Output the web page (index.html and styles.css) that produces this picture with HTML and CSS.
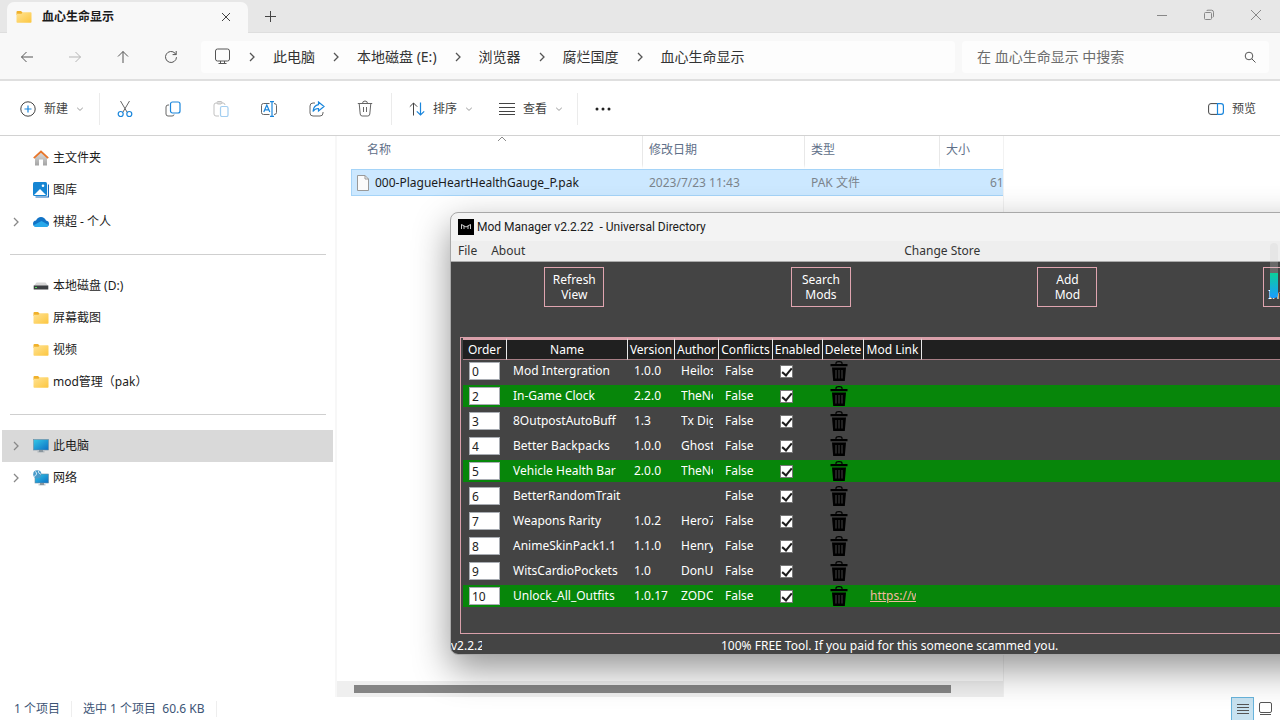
FILE: index.html
```html
<!DOCTYPE html>
<html lang="zh-CN">
<head>
<meta charset="utf-8">
<title>血心生命显示</title>
<link rel="stylesheet" href="styles.css">
</head>
<body>
<svg class="defs" aria-hidden="true">
  <defs>
    <linearGradient id="gFolder" x1="0" y1="0" x2="1" y2="1"><stop offset="0" stop-color="#ffe394"/><stop offset="1" stop-color="#fcc63f"/></linearGradient>
    <linearGradient id="gScreen" x1="0" y1="0" x2="1" y2="1"><stop offset="0" stop-color="#35c8e6"/><stop offset="1" stop-color="#0c6fc4"/></linearGradient>
    <linearGradient id="gWall" x1="0" y1="0" x2="0" y2="1"><stop offset="0" stop-color="#dedede"/><stop offset="1" stop-color="#a3a3a3"/></linearGradient>
    <symbol id="folder" viewBox="0 0 16 16"><path d="M.5 3q0-1 1-1H5l1.500 1.500V6h-6z" fill="#f0b12b"/><path d="M.5 4.800h5L6.800 3.300h8q.7 0 .7.700v9q0 .8-.8.8H1.300q-.8 0-.8-.8z" fill="url(#gFolder)"/></symbol>
    <symbol id="chev" viewBox="0 0 12 12"><path d="M4 2 8 6 4 10" fill="none" stroke="currentColor" stroke-width="1.300"/></symbol>
    <symbol id="down" viewBox="0 0 8 8"><path d="M1.200 2.800 4 5.400 6.800 2.800" fill="none" stroke="#9a9a9a"/></symbol>
    <symbol id="bin" viewBox="0 0 18 20"><path d="M6 3V2q0-1.400 3-1.400T12 2v1" fill="none" stroke="#000" stroke-width="1.200"/><path d="M.5 3h17v2.200H.5zM2 6.500h14L14.800 20H3.200z" fill="#000"/><path d="M6 9v8.500M9 9v8.500M12 9v8.500" class="slot"/></symbol>
  </defs>
</svg>

<div class="explorer">
  <header class="tabs">
    <div class="tab">
      <svg width="16" height="16"><use href="#folder"/></svg>
      <h1 class="tab-title">血心生命显示</h1>
      <button class="plain" aria-label="关闭标签页"><svg width="10" height="10" viewBox="0 0 10 10"><path d="M1 1l8 8M9 1l-8 8" class="ln"/></svg></button>
    </div>
    <button class="plain new-tab" aria-label="新标签页"><svg width="11" height="11" viewBox="0 0 11 11"><path d="M5.500 0v11M0 5.500h11" class="ln"/></svg></button>
    <div class="captions">
      <button class="plain" aria-label="最小化"><svg width="12" height="12" viewBox="0 0 12 12"><path d="M1 6.500h10" class="ln"/></svg></button>
      <button class="plain" aria-label="还原"><svg width="12" height="12" viewBox="0 0 12 12"><path d="M1.500 4.500q0-1 1-1h5q1 0 1 1v5q0 1-1 1h-5q-1 0-1-1zM3.500 2q.3-.8 1.500-.8h3.500q2 0 2 2V7q0 1-.8 1.500" class="ln"/></svg></button>
      <button class="plain" aria-label="关闭"><svg width="12" height="12" viewBox="0 0 12 12"><path d="M1 1l10 10M11 1 1 11" class="ln"/></svg></button>
    </div>
  </header>

  <nav class="address-row" aria-label="地址">
    <button class="plain nav-btn" aria-label="后退"><svg width="14" height="14" viewBox="0 0 14 14"><path d="M13 7H1.500M6.500 2l-5 5 5 5" class="ln"/></svg></button>
    <button class="plain nav-btn dim" aria-label="前进"><svg width="14" height="14" viewBox="0 0 14 14"><path d="M1 7h11.500M7.500 2l5 5-5 5" class="ln"/></svg></button>
    <button class="plain nav-btn" aria-label="向上"><svg width="14" height="14" viewBox="0 0 14 14"><path d="M7 13V1.500M2 6.500l5-5 5 5" class="ln"/></svg></button>
    <button class="plain nav-btn" aria-label="刷新"><svg width="14" height="14" viewBox="0 0 14 14"><path d="M12.500 7.200A5.500 5.500 0 1 1 11 3.200l1 1.300M12.200 1v3.600H8.600" class="ln"/></svg></button>
    <div class="crumbs">
      <svg width="17" height="17" viewBox="0 0 17 17"><path d="M1.500 3q0-2 2-2h10q2 0 2 2v8q0 2-2 2h-10q-2 0-2-2zM6.500 13v2.500M10.500 13v2.500M4.500 15.500h8" class="ln"/></svg>
      <svg class="sep" width="12" height="12"><use href="#chev"/></svg><a href="#">此电脑</a>
      <svg class="sep" width="12" height="12"><use href="#chev"/></svg><a href="#">本地磁盘 (E:)</a>
      <svg class="sep" width="12" height="12"><use href="#chev"/></svg><a href="#">浏览器</a>
      <svg class="sep" width="12" height="12"><use href="#chev"/></svg><a href="#">腐烂国度</a>
      <svg class="sep" width="12" height="12"><use href="#chev"/></svg><a href="#">血心生命显示</a>
    </div>
    <div class="search">
      <input type="text" aria-label="搜索" placeholder="在 血心生命显示 中搜索">
      <svg width="12" height="12" viewBox="0 0 12 12"><circle cx="5" cy="5" r="3.800" class="ln"/><path d="M7.800 7.800l3.700 3.700" class="ln"/></svg>
    </div>
  </nav>

  <div class="toolbar">
    <button class="plain tool new"><svg width="16" height="16" viewBox="0 0 16 16"><circle cx="8" cy="8" r="7.200" class="ln"/><path d="M8 4.500v7M4.500 8h7" class="bl"/></svg>新建<svg width="8" height="8"><use href="#down"/></svg></button>
    <span class="rule"></span>
    <button class="plain icon-btn" aria-label="剪切"><svg width="16" height="18" viewBox="0 0 16 18"><path d="M3.500 1l6.800 11.500M12.500 1 5.700 12.500" class="ln"/><circle cx="3.700" cy="14" r="2.500" class="bl"/><circle cx="12.300" cy="14" r="2.500" class="bl"/></svg></button>
    <button class="plain icon-btn" aria-label="复制"><svg width="16" height="16" viewBox="0 0 16 16"><path d="M4 4H3Q1 4 1 6v7q0 2 2 2h4q2 0 2-1.500" class="ln"/><rect x="5.500" y="1" width="9.500" height="11" rx="2" class="bl"/></svg></button>
    <button class="plain icon-btn faded" aria-label="粘贴"><svg width="16" height="16" viewBox="0 0 16 16"><path d="M6 15H3q-2 0-2-2V4q0-2 2-2h7q2 0 2 2M4 1.500q0-1 1-1h3q1 0 1 1T8 3H5Q4 3 4 2" class="ln"/><rect x="7.500" y="5.500" width="7.500" height="10" rx="1.500" class="bl"/></svg></button>
    <button class="plain icon-btn" aria-label="重命名"><svg width="18" height="16" viewBox="0 0 18 16"><path d="M9.500 13.500H3.500q-2 0-2-2v-7q0-2 2-2h6M14 2.500q2.500 0 2.500 2v7q0 2-2.500 2" class="ln"/><path d="M3.800 11l3-7 3 7M4.800 8.800h4M12 .700v14.600M10 .700h4M10 15.300h4" class="bl"/></svg></button>
    <button class="plain icon-btn" aria-label="共享"><svg width="16" height="16" viewBox="0 0 16 16"><path d="M6 2H4Q1 2 1 5v7q0 3 3 3h7q3 0 3-3v-1" class="ln"/><path d="M9.500 1l5.500 4.500-5.500 4.500V7.500Q6 7.300 4 10.500 4.500 4.500 9.500 3.700z" class="bl"/></svg></button>
    <button class="plain icon-btn" aria-label="删除"><svg width="16" height="17" viewBox="0 0 16 17"><path d="M.8 3.500h14.400M5.500 3.500Q5.500 1 8 1t2.500 2.500M2.200 3.500l1 10.500q.2 2 2 2h5.600q1.800 0 2-2l1-10.500M6.500 7v5M9.500 7v5" class="ln"/></svg></button>
    <span class="rule wide"></span>
    <button class="plain tool"><svg width="16" height="14" viewBox="0 0 16 14"><path d="M4.500 13.500V1M.8 4.700 4.500 1l3.700 3.700" class="ln"/><path d="M11.500.5V13M7.800 9.300l3.700 3.700 3.700-3.700" class="bl"/></svg>排序<svg width="8" height="8"><use href="#down"/></svg></button>
    <button class="plain tool view"><svg width="16" height="14" viewBox="0 0 16 14"><path d="M0 1.500h16M0 5.500h16M0 9.500h16M0 12.500h16" class="ln"/></svg>查看<svg width="8" height="8"><use href="#down"/></svg></button>
    <span class="rule"></span>
    <button class="plain icon-btn" aria-label="更多"><svg width="16" height="4" viewBox="0 0 16 4"><g fill="#222"><circle cx="2" cy="2" r="1.500"/><circle cx="8" cy="2" r="1.500"/><circle cx="14" cy="2" r="1.500"/></g></svg></button>
    <button class="plain tool preview"><svg width="16" height="12" viewBox="0 0 16 12"><path d="M9 .600H3Q.6.600.6 3v6q0 2.400 2.400 2.400h6" class="ln"/><path d="M9.500.600H13q2.400 0 2.400 2.400v6q0 2.400-2.400 2.400H9.500z" class="bl"/></svg>预览</button>
  </div>

  <main class="main">
    <ul class="tree">
      <li><span class="arrow"></span><svg width="16" height="16" viewBox="0 0 16 16"><path d="M2 7.500 8 2l6 5.500V15.500h-4V9.500H6v6H2z" fill="url(#gWall)"/><path d="M.8 8.200 8 1.500l7.200 6.700" fill="none" stroke="#e8762b" stroke-width="1.800"/></svg>主文件夹</li>
      <li><span class="arrow"></span><svg width="16" height="16" viewBox="0 0 16 16"><path d="M15.500 2.500v12.500H2.500" fill="none" stroke="#1769ba" stroke-width="1.200"/><rect width="14" height="14" rx="1.500" fill="#1585d3"/><path d="M1 13 7 7l6 6z" fill="#fff"/><circle cx="10" cy="3.800" r="1.300" fill="#fff"/></svg>图库</li>
      <li><span class="arrow"><svg width="12" height="12"><use href="#chev"/></svg></span><svg width="16" height="16" viewBox="0 0 16 16"><path d="M3.500 13q-3.500-.4-3.500-3.200T3 6.600Q4.500 3 8 3t5 3.500q3 .5 3 3.300T13 13z" fill="#1173c6"/><path d="M3 13q-2-.4-2.500-1.800L8.500 7l7.200 4Q15 13 13 13z" fill="#28a8ea"/></svg>祺超 - 个人</li>
      <li class="line" role="separator"></li>
      <li><span class="arrow"></span><svg width="16" height="16" viewBox="0 0 16 16"><path d="M3.500 4.500h9l2.800 3.500H.7z" fill="#d6d6d6"/><rect x=".7" y="7.500" width="14.600" height="4" fill="#3c3f42"/><rect x="2" y="9" width="2" height="1" fill="#57e05f"/></svg>本地磁盘 (D:)</li>
      <li><span class="arrow"></span><svg width="16" height="16"><use href="#folder"/></svg>屏幕截图</li>
      <li><span class="arrow"></span><svg width="16" height="16"><use href="#folder"/></svg>视频</li>
      <li><span class="arrow"></span><svg width="16" height="16"><use href="#folder"/></svg>mod管理（pak）</li>
      <li class="line" role="separator"></li>
      <li class="current"><span class="arrow"><svg width="12" height="12"><use href="#chev"/></svg></span><svg width="16" height="16" viewBox="0 0 16 16"><rect x=".5" y="1.500" width="15" height="10.500" fill="url(#gScreen)" stroke="#6d8ba0" stroke-width=".6"/><path d="M6 12h4v1.500h1.500v.8h-7v-.8H6z" fill="#8a969e"/></svg>此电脑</li>
      <li><span class="arrow"><svg width="12" height="12"><use href="#chev"/></svg></span><svg width="16" height="16" viewBox="0 0 16 16"><rect x="2" y="4" width="13.500" height="9" fill="url(#gScreen)" stroke="#6d8ba0" stroke-width=".6"/><path d="M7 13h4v1.400h1.500v.9h-7v-.9H7z" fill="#8a969e"/><circle cx="4.300" cy="4.300" r="4.100" fill="#4a9bca"/><path d="M2 1.500q2 .5 1.500 2.500T1 6.500M5.500.8q-1 2.200 2.400 3.500" fill="none" stroke="#cfeaf7"/></svg>网络</li>
    </ul>

    <section class="files">
      <table class="file-table">
        <colgroup><col class="c-name"><col class="c-date"><col class="c-type"><col class="c-size"></colgroup>
        <thead><tr><th class="first">名称<svg class="sorted" width="10" height="6" viewBox="0 0 10 6"><path d="M1 5l4-4 4 4" fill="none" stroke="#8a8a8a"/></svg></th><th>修改日期</th><th>类型</th><th>大小</th></tr></thead>
        <tbody><tr><td class="fname"><span><svg width="12" height="16" viewBox="0 0 12 16"><path d="M.5.500h7.500l3.500 3.500v11.500H.5z" fill="#fbfbfb" stroke="#999"/><path d="M8 .500V4h3.500" fill="none" stroke="#999"/></svg>000-PlagueHeartHealthGauge_P.pak</span></td><td>2023/7/23 11:43</td><td>PAK 文件</td><td class="size">61 KB</td></tr></tbody>
      </table>
      <div class="scroll"><div class="thumb"></div></div>
    </section>
  </main>

  <footer class="status">
    <span>1 个项目</span><span>选中 1 个项目&nbsp; 60.6 KB</span>
    <div class="modes">
      <button class="plain mode on" aria-label="详细信息"><svg width="12" height="12" viewBox="0 0 12 12"><path d="M0 1.500h12M0 4.500h12M0 7.500h12M0 10.500h12" class="ln"/></svg></button>
      <button class="plain mode" aria-label="大图标"><svg width="13" height="14" viewBox="0 0 13 14"><path d="M.5 2q0-1.500 1.500-1.500h9q1.500 0 1.500 1.500v7q0 1.500-1.500 1.500H2Q.5 10.500.5 9zM1 12.500h11" class="ln"/></svg></button>
    </div>
  </footer>
</div>

<section class="manager">
  <header class="m-title"><svg width="16" height="16" viewBox="0 0 16 16"><path d="M0 0h16v16H0z"/><path d="M3.500 10V5.500L8 8l4.500-2.500V10M6 10V7M10 10V7" fill="none" stroke="#fff" stroke-width=".8"/></svg><h2>Mod Manager v2.2.22 &nbsp;- Universal Directory</h2></header>
  <div class="m-menu"><button class="plain">File</button><button class="plain">About</button><button class="plain store">Change Store</button></div>
  <div class="m-body">
    <div class="actions"><button>Refresh<br>View</button><button>Search<br>Mods</button><button>Add<br>Mod</button><button class="long">Install<br>Integration Mod</button></div>
    <div class="frame">
      <table class="mods">
        <colgroup><col class="w44"><col class="w121"><col class="w47"><col class="w44"><col class="w54"><col class="w50"><col class="w41"><col class="w58"><col></colgroup>
        <thead><tr><th>Order</th><th>Name</th><th>Version</th><th>Author</th><th>Conflicts</th><th>Enabled</th><th>Delete</th><th>Mod Link</th><th></th></tr></thead>
        <tbody>
          <tr><td><input type="text" aria-label="Order" value="0"></td><td>Mod Intergration</td><td>1.0.0</td><td><div class="cut">Heilos</div></td><td>False</td><td><input type="checkbox" aria-label="Enabled" checked></td><td><button class="plain bin" aria-label="Delete"><svg width="18" height="20"><use href="#bin"/></svg></button></td><td></td><td></td></tr>
          <tr class="green"><td><input type="text" aria-label="Order" value="2"></td><td>In-Game Clock</td><td>2.2.0</td><td><div class="cut">TheNo</div></td><td>False</td><td><input type="checkbox" aria-label="Enabled" checked></td><td><button class="plain bin" aria-label="Delete"><svg width="18" height="20"><use href="#bin"/></svg></button></td><td></td><td></td></tr>
          <tr><td><input type="text" aria-label="Order" value="3"></td><td>8OutpostAutoBuff</td><td>1.3</td><td><div class="cut">Tx Dig</div></td><td>False</td><td><input type="checkbox" aria-label="Enabled" checked></td><td><button class="plain bin" aria-label="Delete"><svg width="18" height="20"><use href="#bin"/></svg></button></td><td></td><td></td></tr>
          <tr><td><input type="text" aria-label="Order" value="4"></td><td>Better Backpacks</td><td>1.0.0</td><td><div class="cut">Ghost</div></td><td>False</td><td><input type="checkbox" aria-label="Enabled" checked></td><td><button class="plain bin" aria-label="Delete"><svg width="18" height="20"><use href="#bin"/></svg></button></td><td></td><td></td></tr>
          <tr class="green"><td><input type="text" aria-label="Order" value="5"></td><td>Vehicle Health Bar</td><td>2.0.0</td><td><div class="cut">TheNo</div></td><td>False</td><td><input type="checkbox" aria-label="Enabled" checked></td><td><button class="plain bin" aria-label="Delete"><svg width="18" height="20"><use href="#bin"/></svg></button></td><td></td><td></td></tr>
          <tr><td><input type="text" aria-label="Order" value="6"></td><td>BetterRandomTrait</td><td></td><td></td><td>False</td><td><input type="checkbox" aria-label="Enabled" checked></td><td><button class="plain bin" aria-label="Delete"><svg width="18" height="20"><use href="#bin"/></svg></button></td><td></td><td></td></tr>
          <tr><td><input type="text" aria-label="Order" value="7"></td><td>Weapons Rarity</td><td>1.0.2</td><td><div class="cut">Hero7</div></td><td>False</td><td><input type="checkbox" aria-label="Enabled" checked></td><td><button class="plain bin" aria-label="Delete"><svg width="18" height="20"><use href="#bin"/></svg></button></td><td></td><td></td></tr>
          <tr><td><input type="text" aria-label="Order" value="8"></td><td>AnimeSkinPack1.1</td><td>1.1.0</td><td><div class="cut">Henry</div></td><td>False</td><td><input type="checkbox" aria-label="Enabled" checked></td><td><button class="plain bin" aria-label="Delete"><svg width="18" height="20"><use href="#bin"/></svg></button></td><td></td><td></td></tr>
          <tr><td><input type="text" aria-label="Order" value="9"></td><td>WitsCardioPockets</td><td>1.0</td><td><div class="cut">DonU</div></td><td>False</td><td><input type="checkbox" aria-label="Enabled" checked></td><td><button class="plain bin" aria-label="Delete"><svg width="18" height="20"><use href="#bin"/></svg></button></td><td></td><td></td></tr>
          <tr class="green"><td><input type="text" aria-label="Order" value="10"></td><td>Unlock_All_Outfits</td><td>1.0.17</td><td><div class="cut">ZODC</div></td><td>False</td><td><input type="checkbox" aria-label="Enabled" checked></td><td><button class="plain bin" aria-label="Delete"><svg width="18" height="20"><use href="#bin"/></svg></button></td><td><div class="cut link"><a href="#">https://w</a></div></td><td></td></tr>
        </tbody>
      </table>
    </div>
    <footer class="m-foot"><span class="ver">v2.2.22</span><span>100% FREE Tool. If you paid for this someone scammed you.</span></footer>
  </div>
</section>
<div class="gauge"></div>
</body>
</html>
```
FILE: styles.css
```css
* { box-sizing: border-box; }
body {
  margin: 0;
  height: 100vh;
  position: relative;
  overflow: hidden;
  font: 12px/16px "Noto Sans", "Noto Sans CJK SC", sans-serif;
  color: #1b1b1b;
  background: #fff;
}
h1, h2 { margin: 0; font-size: 12px; font-weight: 400; }
svg { flex: none; display: block; }
.defs { position: absolute; width: 0; height: 0; }
.ln { fill: none; stroke: currentColor; stroke-width: 1; }
.bl { fill: none; stroke: #1a86dc; stroke-width: 1.2; }
.plain {
  display: flex;
  align-items: center;
  justify-content: center;
  border: 0;
  padding: 0;
  background: none;
  font: inherit;
  color: inherit;
}

.explorer { display: flex; flex-direction: column; height: 100%; }

.tabs { display: flex; height: 33px; background: #e7e7e7; border-bottom: 1px solid #dedede; color: #444; }
.tab {
  display: flex;
  align-items: center;
  gap: 10px;
  width: 241px;
  height: 31px;
  margin: 2px 0 0 7px;
  padding: 0 17px 2px 9px;
  background: #f8f8f8;
  border-radius: 7px 7px 0 0;
}
.tab-title { flex: 1; font-weight: 700; color: #1b1b1b; }
.new-tab { width: 45px; }
.captions { display: flex; margin-left: auto; height: 29px; padding-right: 1px; color: #888; }
.captions .plain { width: 47px; }

.address-row {
  display: flex;
  align-items: center;
  height: 48px;
  padding: 1px 11px 0 3px;
  background: #f8f8f8;
  border-bottom: 2px solid #dfdfdf;
  color: #555;
}
.nav-btn { width: 48px; height: 32px; }
.dim { color: #b5b5b5; }
.crumbs {
  display: flex;
  align-items: center;
  flex: 1;
  height: 32px;
  margin-left: 6px;
  padding-left: 13px;
  background: #fdfdfd;
  border-radius: 4px;
  font-size: 14px;
}
.crumbs a { color: #333; text-decoration: none; white-space: nowrap; }
.sep { margin: 0 15px; }
.search {
  display: flex;
  align-items: center;
  width: 307px;
  height: 32px;
  margin-left: 7px;
  padding: 0 13px 0 15px;
  background: #fdfdfd;
  border-radius: 4px;
}
.search input { flex: 1; min-width: 0; border: 0; padding: 0; background: none; font: inherit; font-size: 14px; }
.search input::placeholder { color: #6c6c6c; }

.toolbar {
  display: flex;
  align-items: center;
  height: 55px;
  padding: 1px 24px 0 20px;
  border-bottom: 1px solid #d2d2d2;
  color: #666;
}
.tool { gap: 8px; margin-left: 16px; color: #444; }
.tool.new { margin: 0 15px 0 0; }
.tool.view { margin: 0 14px 0 26px; }
.tool.preview { margin-left: auto; }
.rule { width: 1px; height: 32px; margin-right: 1px; background: #ebebeb; }
.rule.wide { margin-left: 2px; }
.icon-btn { width: 48px; height: 32px; }
.faded { opacity: .4; }

.main { display: flex; flex: 1; min-height: 0; }
.tree { list-style: none; width: 337px; margin: 0; padding: 6px 2px 0 2px; border-right: 2px solid #f7f7f7; }
.tree li { display: flex; align-items: center; gap: 4px; height: 32px; }
.tree .arrow { width: 27px; padding-left: 8px; color: #888; }
.tree .current { background: #d9d9d9; }
.tree .line::before { content: ""; flex: 1; height: 1px; margin: 0 7px 0 8px; background: #cfcfcf; }

.files { display: flex; flex-direction: column; width: 667px; border-right: 1px solid #f2f2f2; overflow: hidden; }
.file-table { table-layout: fixed; width: 652px; margin-left: 14px; border-spacing: 0; }
.c-name { width: 291px; }
.c-date { width: 162px; }
.c-type { width: 135px; }
.c-size { width: 64px; }
.file-table th {
  position: relative;
  height: 33px;
  padding: 0 0 0 6px;
  border-left: 1px solid #e8e8e8;
  border-bottom: 5px solid transparent;
  text-align: left;
  font-weight: 400;
  color: #5f7089;
}
.file-table th.first { padding-left: 16px; border-left: 0; }
.sorted { position: absolute; top: 0; left: 50%; }
.file-table td {
  height: 27px;
  padding: 0 0 0 7px;
  background: #cce8ff;
  border: solid #a5d4f8;
  border-width: 1px 0;
  color: #7b848c;
  white-space: nowrap;
}
.file-table .fname { padding-left: 5px; border-left-width: 1px; color: #1b1b1b; }
.fname span { display: flex; align-items: center; gap: 6px; }
.file-table .size { padding-left: 51px; overflow: hidden; }
.scroll { height: 16px; margin: auto 0 0; padding: 4px 52px 4px 17px; background: #efefef; }
.thumb { height: 8px; background: #858585; }

.status { display: flex; height: 23px; align-items: center; padding-left: 14px; color: #3d5576; }
.status > span { margin-right: 11px; padding-right: 11px; border-right: 1px solid #eee; }
.modes { display: flex; height: 100%; margin-left: auto; padding-right: 3px; color: #555; }
.mode { width: 23px; }
.mode.on { border: 1px solid #68b4dc; border-bottom: 0; background: #c8e2f0; }

/* Mod Manager window, reaching past the right edge of the desktop */
.manager {
  position: absolute;
  top: 212px;
  left: 450px;
  right: -405px;
  bottom: 65px;
  display: flex;
  flex-direction: column;
  overflow: hidden;
  border: 1px solid #a8a8a8;
  border-radius: 8px;
  background: #f3f3f3;
  box-shadow: 0 14px 36px rgba(0, 0, 0, .42);
}
.m-title { display: flex; align-items: center; gap: 3px; height: 28px; padding-left: 7px; }
.m-title h2 { font-family: Roboto, sans-serif; }
.m-menu { display: flex; height: 21px; padding-left: 7px; gap: 14px; background: #eee; border-bottom: 1px solid #aaa; color: #333; }
.m-menu .store { margin-left: 365px; }
.m-body { display: flex; flex-direction: column; flex: 1; background: #444; color: #fff; }
.actions { display: grid; grid-template-columns: repeat(5, 1fr); justify-items: center; padding: 5px 0 30px; }
.actions button {
  width: 60px;
  height: 40px;
  padding: 0;
  border: 1px solid #e0a5b0;
  background: none;
  color: #fff;
  font: 12px/15px "Noto Sans", sans-serif;
}
.actions .long { width: 102px; }
.frame { flex: 1; margin-left: 9px; padding: 0 2px; border: 1px solid #d9a0aa; }
.mods { table-layout: fixed; width: 100%; border-spacing: 0; }
.w41 { width: 41px; } .w44 { width: 44px; } .w47 { width: 47px; } .w50 { width: 50px; }
.w54 { width: 54px; } .w58 { width: 58px; } .w121 { width: 121px; }
.mods th {
  height: 22px;
  padding: 0;
  background: #202020;
  border: 1px solid #e8e8e8;
  border-width: 2px 1px 1px 0;
  border-top: 2px double #d9a0aa;
  border-bottom-color: #a87f86;
  font-weight: 400;
  line-height: 17px;
  white-space: nowrap;
}
.mods td {
  height: 25px;
  padding: 0 0 0 6px;
  border-bottom: 3px solid transparent;
  background-clip: padding-box;
  white-space: nowrap;
}
.mods .green td { background-color: #07860a; }
.mods input[type="text"] {
  display: block;
  width: 31px;
  height: 18px;
  padding: 0 2px;
  border: 1px solid #a9adb3;
  background: #fff;
  color: #222;
  font: 12px/16px "Noto Sans", sans-serif;
}
.mods input[type="checkbox"] {
  appearance: none;
  display: grid;
  place-items: center;
  width: 13px;
  height: 13px;
  margin: 0 0 0 1px;
  border: 1px solid #777;
  background: #fff;
}
.mods input[type="checkbox"]::before {
  content: "";
  width: 4px;
  height: 8px;
  margin-bottom: 2px;
  border: solid #1c1c1c;
  border-width: 0 2px 2px 0;
  transform: rotate(40deg);
}
.bin { margin-left: 1px; }
.slot { fill: none; stroke: #444; stroke-width: 1; }
.green .slot { stroke: #07860a; }
.cut { width: 32px; overflow: hidden; }
.cut.link { width: 46px; }
.cut a { color: #f2b9a0; }
.m-foot { display: flex; align-items: flex-end; height: 20px; gap: 239px; white-space: nowrap; }
.ver { width: 31px; overflow: hidden; }

/* Floating level meter */
.gauge {
  position: absolute;
  top: 243px;
  right: 2px;
  width: 8px;
  height: 55px;
  border-radius: 4px 4px 4px 2px;
  background: linear-gradient(#d0d0d044 0 30px, #0cd09a 30px, #1a9cff);
}
```
